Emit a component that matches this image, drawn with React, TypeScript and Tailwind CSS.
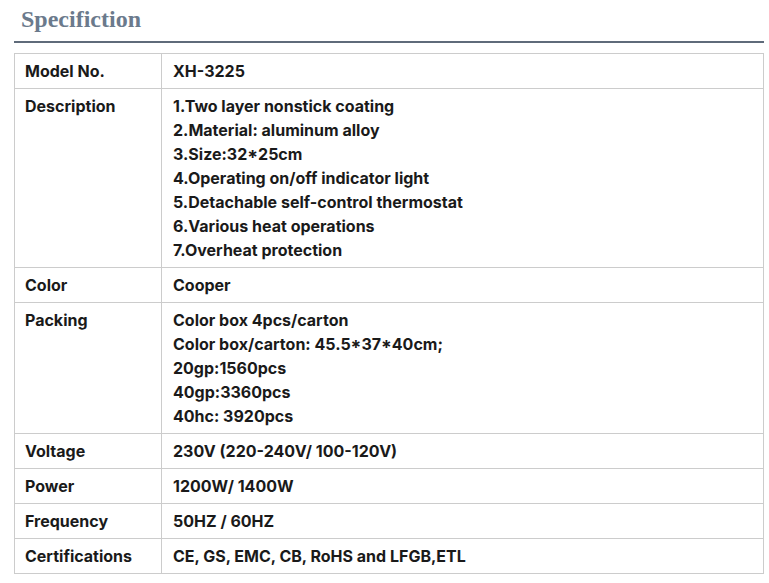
import React from "react";

const rows: { label: string; lines: string[] }[] = [
  { label: "Model No.", lines: ["XH-3225"] },
  {
    label: "Description",
    lines: [
      "1.Two layer nonstick coating",
      "2.Material: aluminum alloy",
      "3.Size:32*25cm",
      "4.Operating on/off indicator light",
      "5.Detachable self-control thermostat",
      "6.Various heat operations",
      "7.Overheat protection",
    ],
  },
  { label: "Color", lines: ["Cooper"] },
  {
    label: "Packing",
    lines: [
      "Color box 4pcs/carton",
      "Color box/carton: 45.5*37*40cm;",
      "20gp:1560pcs",
      "40gp:3360pcs",
      "40hc: 3920pcs",
    ],
  },
  { label: "Voltage", lines: ["230V (220-240V/ 100-120V)"] },
  { label: "Power", lines: ["1200W/ 1400W"] },
  { label: "Frequency", lines: ["50HZ / 60HZ"] },
  { label: "Certifications", lines: ["CE, GS, EMC, CB, RoHS and LFGB,ETL"] },
];

export default function App() {
  return (
    <div className="w-[769px] h-[583px] bg-white overflow-hidden">
      <div className="pt-[4px] pl-[21px]">
        <h1
          className="text-[24px] leading-[30px] font-bold text-[#6b7a8c]"
          style={{ fontFamily: '"Liberation Serif", "Times New Roman", serif' }}
        >
          Specifiction
        </h1>
      </div>
      <div className="ml-[14px] mt-[7px] w-[750px] h-[2px] bg-[#5f6b7a]" />
      <table
        className="ml-[14px] mt-[10px] w-[750px] border-collapse text-[16px] leading-[24px] font-bold text-[#1a1a1a]"
        style={{ fontFamily: 'Inter, "Noto Sans", sans-serif' }}
      >
        <tbody>
          {rows.map((r) => (
            <tr key={r.label}>
              <td className="w-[147px] border border-[#cccccc] pl-[10px] pr-[6px] pt-[5px] pb-[5px] align-top">
                {r.label}
              </td>
              <td className="border border-[#cccccc] pl-[11px] pr-[6px] pt-[5px] pb-[5px] align-top">
                {r.lines.map((l, i) => (
                  <div key={i}>{l}</div>
                ))}
              </td>
            </tr>
          ))}
        </tbody>
      </table>
    </div>
  );
}
